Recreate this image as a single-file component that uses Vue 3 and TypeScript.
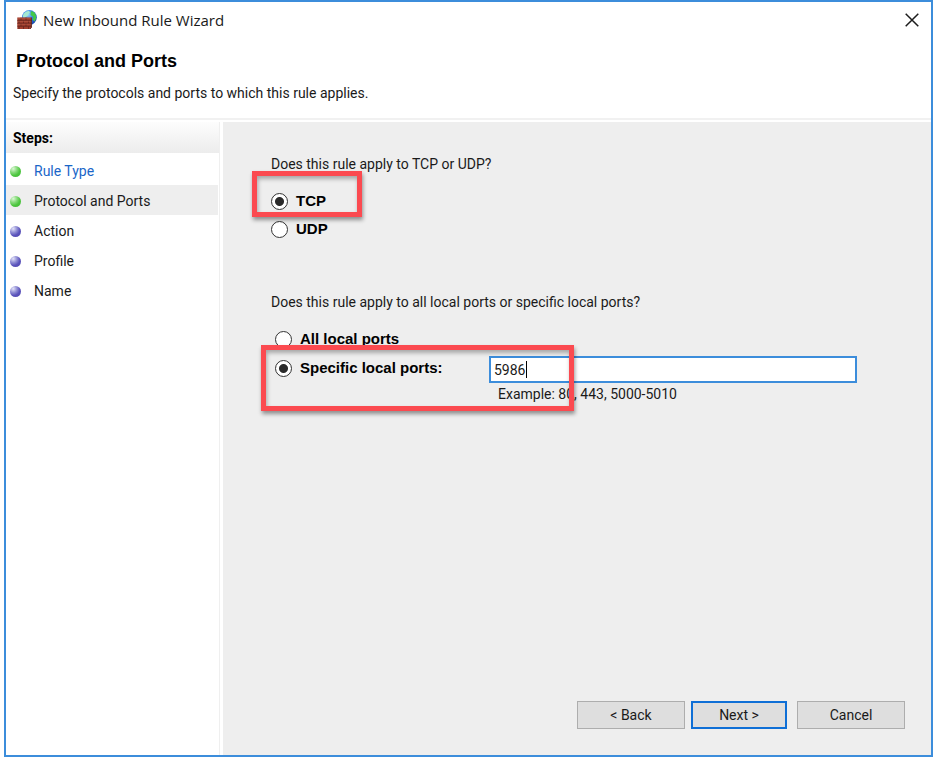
<script setup lang="ts">
import { ref } from 'vue'

interface Step {
  label: string
  done: boolean
}

const steps: Step[] = [
  { label: 'Rule Type', done: true },
  { label: 'Protocol and Ports', done: true },
  { label: 'Action', done: false },
  { label: 'Profile', done: false },
  { label: 'Name', done: false },
]

const current = ref(1)
const protocol = ref<'tcp' | 'udp'>('tcp')
const scope = ref<'all' | 'specific'>('specific')
const ports = ref('5986')
</script>

<template>
  <div class="desktop">
    <div class="window">
      <header class="head">
        <div class="titlebar">
          <svg class="app-icon" viewBox="0 0 20 20" aria-hidden="true">
            <defs>
              <radialGradient id="globe" cx="0.4" cy="0.3" r="0.75">
                <stop offset="0" stop-color="#9adcfb" />
                <stop offset="0.45" stop-color="#3a86e6" />
                <stop offset="1" stop-color="#123fa8" />
              </radialGradient>
            </defs>
            <circle cx="12.400" cy="7.400" r="7.400" fill="url(#globe)" />
            <path d="M6.500 4 Q8.500 1 12 0.700 L13 2.500 L11.500 4 L10.500 6 L8 7.500 H6 Q5.500 5.500 6.500 4 Z" fill="#a5e8d2" />
            <path d="M14 1 L17.500 2.600 Q19.600 5 19.200 8.500 L17.500 11.500 L15.500 9.500 L16.500 7 L13.500 5 Z" fill="#43c84a" />
            <path d="M0.300 7.500 H14.700 V17.500 L13 19 H0.300 Z" fill="#a03e2e" />
            <path d="M0.300 10.400 H14.700 M0.300 13.300 H14.700 M0.300 16.200 H14.700 M4 7.500 V10.400 M9 7.500 V10.400 M2 10.400 V13.300 M6.500 10.400 V13.300 M11.500 10.400 V13.300 M4 13.300 V16.200 M9 13.300 V16.200 M2 16.200 V19 M6.500 16.200 V19 M11.500 16.200 V19" stroke="#65251e" stroke-width="0.800" fill="none" />
            <path d="M0.500 8.200 H14 M0.500 11.300 H14 M0.500 14.200 H14" stroke="#c0664f" stroke-width="0.500" fill="none" />
            <path d="M14.300 7.500 V17.600 L13 19" stroke="#54201b" stroke-width="0.800" fill="none" />
          </svg>
          <span class="title">New Inbound Rule Wizard</span>
          <button class="close" type="button" aria-label="Close">
            <svg viewBox="0 0 14 14" aria-hidden="true">
              <path d="M0.700 0.700 L13.300 13.300 M13.300 0.700 L0.700 13.300" stroke="#1c1c1c" stroke-width="1.500" />
            </svg>
          </button>
        </div>
        <h1>Protocol and Ports</h1>
        <p class="intro">Specify the protocols and ports to which this rule applies.</p>
      </header>

      <div class="body">
        <nav class="steps" aria-labelledby="steps-title">
          <h2 id="steps-title">Steps:</h2>
          <ol>
            <li v-for="(step, i) in steps" :key="step.label" :class="{ current: i === current }">
              <span class="dot" :class="{ done: step.done }"></span>
              <a v-if="i < current" href="#" @click.prevent="current = i">{{ step.label }}</a>
              <span v-else>{{ step.label }}</span>
            </li>
          </ol>
        </nav>

        <main class="page">
          <section class="group" role="radiogroup" aria-labelledby="q-protocol">
            <p id="q-protocol" class="question">Does this rule apply to TCP or UDP?</p>
            <div class="options">
              <label class="option">
                <input v-model="protocol" type="radio" name="protocol" value="tcp" />
                <span>TCP</span>
              </label>
              <label class="option">
                <input v-model="protocol" type="radio" name="protocol" value="udp" />
                <span>UDP</span>
              </label>
              <div class="mark mark-protocol"></div>
            </div>
          </section>

          <section class="group" role="radiogroup" aria-labelledby="q-ports">
            <p id="q-ports" class="question">Does this rule apply to all local ports or specific local ports?</p>
            <div class="options indented">
              <label class="option">
                <input v-model="scope" type="radio" name="scope" value="all" />
                <span>All local ports</span>
              </label>
              <div class="specific">
                <label class="option">
                  <input v-model="scope" type="radio" name="scope" value="specific" />
                  <span>Specific local ports:</span>
                </label>
                <div class="port-field">
                  <div class="port-box">
                    <input v-model="ports" type="text" aria-label="Specific local ports" aria-describedby="example" />
                    <span class="caret"></span>
                  </div>
                  <p id="example">Example: 80, 443, 5000-5010</p>
                </div>
              </div>
              <div class="mark mark-ports"></div>
            </div>
          </section>

          <footer class="actions">
            <button type="button">&lt; Back</button>
            <button type="button" class="primary">Next &gt;</button>
            <button type="button" class="cancel">Cancel</button>
          </footer>
        </main>
      </div>
    </div>
  </div>
</template>

<style>
body {
  margin: 0;
  background: #fff;
}
</style>

<style scoped>
* {
  box-sizing: border-box;
}

h1,
h2,
p,
ol {
  margin: 0;
  padding: 0;
}

.desktop {
  display: flex;
  min-height: 100vh;
  padding: 0 3px 1px 4px;
  font-family: Roboto, "Liberation Sans", sans-serif;
  font-size: 14px;
  line-height: 20px;
  color: #1a1a1a;
}

.window {
  flex: 1;
  display: flex;
  flex-direction: column;
  border: 2px solid #3c8ddb;
  background: #fff;
}

.head {
  padding-bottom: 15px;
  border-bottom: 2px solid #f1f1f1;
}

.titlebar {
  display: flex;
  align-items: center;
  height: 36px;
  padding: 0 12px 0 11px;
}

.app-icon {
  width: 20px;
  height: 20px;
}

.title {
  flex: 1;
  margin-left: 6px;
  font-family: "Open Sans", sans-serif;
  font-size: 15px;
}

.close {
  display: flex;
  padding: 0;
  border: 0;
  background: none;
}

.close svg {
  width: 14px;
  height: 14px;
}

h1 {
  margin-top: 13px;
  padding-left: 10px;
  font-family: "Liberation Sans", sans-serif;
  font-size: 18px;
  line-height: 20px;
  color: #000;
}

.intro {
  margin-top: 12px;
  padding-left: 7px;
}

.body {
  flex: 1;
  display: flex;
  padding-top: 2px;
}

.steps {
  width: 214px;
  border-right: 1px solid #efefef;
}

h2 {
  height: 31px;
  padding-left: 7px;
  background: linear-gradient(#fdfdfd, #ececec);
  font-size: 14px;
  line-height: 32px;
  color: #000;
}

ol {
  margin-top: 2px;
  margin-right: 1px;
  list-style: none;
}

li {
  display: flex;
  align-items: center;
  gap: 13px;
  height: 30px;
  padding: 2px 0 0 4px;
}

li.current {
  background: #eee;
}

.dot {
  width: 11px;
  height: 11px;
  border-radius: 50%;
  background: radial-gradient(circle at 30% 25%, #e4e4fa 0, #8c8ad2 35%, #5a52bb 60%, #5149b0 100%);
}

.dot.done {
  background: radial-gradient(circle at 30% 25%, #dcf8d6 0, #82d876 35%, #4cc63e 60%, #44b838 100%);
}

a {
  color: #1a66c8;
  text-decoration: none;
}

.page {
  flex: 1;
  display: flex;
  flex-direction: column;
  margin-left: 3px;
  padding: 32px 74px 26px 48px;
  background: #eee;
}

.group + .group {
  margin-top: 49px;
}

.options {
  position: relative;
  margin-top: 13px;
}

.options.indented {
  padding-left: 4px;
}

.option {
  display: flex;
  align-items: center;
  gap: 8px;
  height: 28px;
  font-family: "Liberation Sans", sans-serif;
  font-size: 15px;
  font-weight: bold;
  color: #000;
}

input[type="radio"] {
  appearance: none;
  flex: none;
  width: 17px;
  height: 17px;
  margin: 0;
  border: 1px solid #333;
  border-radius: 50%;
  background: #fff;
}

input[type="radio"]:checked {
  background: radial-gradient(circle, #2a2a2a 4px, #fff 5px);
}

.specific {
  display: flex;
  align-items: flex-start;
  padding-top: 1px;
}

.specific .option {
  flex: none;
  width: 214px;
}

.port-field {
  flex: 1;
  padding-top: 2px;
}

.port-box {
  display: grid;
}

.port-box input {
  width: 100%;
  height: 27px;
  padding: 0 3px;
  border: 2px solid #3c8ddb;
  border-radius: 0;
  outline: none;
  background: #fff;
  font: inherit;
  color: inherit;
}

.port-box > * {
  grid-area: 1 / 1;
}

.caret {
  align-self: center;
  width: 1px;
  height: 17px;
  margin-left: 37px;
  background: #000;
}

.port-field p {
  margin-top: 1px;
  padding-left: 9px;
}

.mark {
  position: absolute;
  border: 5px solid #fb4a50;
  box-shadow: 1px 3px 4px rgba(0, 0, 0, 0.4), inset 1px 3px 4px rgba(0, 0, 0, 0.3);
  pointer-events: none;
}

.mark-protocol {
  top: -16px;
  left: -19px;
  width: 110px;
  height: 46px;
}

.mark-ports {
  top: 20px;
  left: -10px;
  width: 313px;
  height: 66px;
}

.actions {
  display: flex;
  justify-content: flex-end;
  margin-top: auto;
  margin-right: -48px;
}

.actions button {
  width: 108px;
  height: 28px;
  padding: 0;
  border: 1px solid #adadad;
  background: #dedede;
  font: inherit;
  color: inherit;
}

.actions .primary {
  width: 96px;
  margin: 0 10px 0 6px;
  border: 2px solid #0f6fd6;
}
</style>
